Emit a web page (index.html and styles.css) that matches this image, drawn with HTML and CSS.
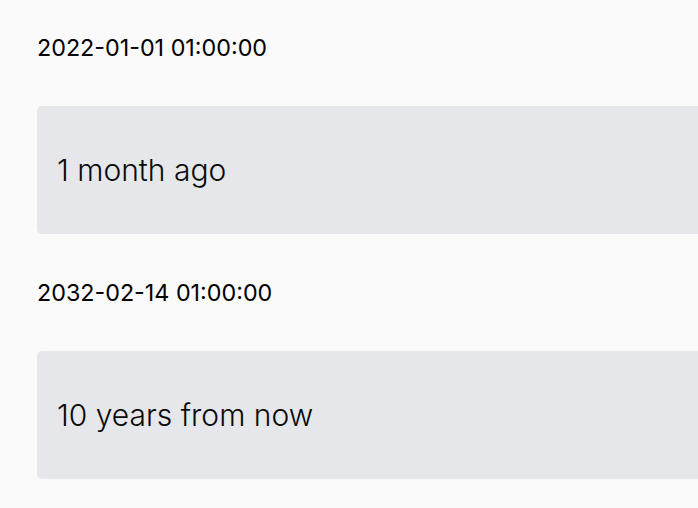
FILE: index.html
```html
<!DOCTYPE html>
<html>
<head>
<meta charset="utf-8">
<link rel="stylesheet" href="styles.css">
</head>
<body>
<main class="list">
  <section class="item">
    <div class="label">2022-01-01 01:00:00</div>
    <div class="box">1 month ago</div>
  </section>
  <section class="item">
    <div class="label">2032-02-14 01:00:00</div>
    <div class="box">10 years from now</div>
  </section>
</main>
</body>
</html>
```
FILE: styles.css
```css
html, body {
  margin: 0;
  padding: 0;
  background: #fafafa;
  overflow: hidden;
}
body {
  font-family: Inter, "Noto Sans", sans-serif;
  color: #111;
}
.list {
  padding: 36px 0 0 37px;
  display: flex;
  flex-direction: column;
}
.item {
  display: flex;
  flex-direction: column;
}
.label {
  font-size: 23.3px;
  font-weight: 420;
  line-height: 24px;
  color: #000;
  margin-bottom: 46px;
}
.box {
  height: 128px;
  box-sizing: border-box;
  background: #e5e7eb;
  border-radius: 5px 0 0 5px;
  padding-left: 20px;
  display: flex;
  align-items: center;
  font-size: 30px;
  font-weight: 300;
  color: #0a0a0a;
  margin-bottom: 47px;
}
```
